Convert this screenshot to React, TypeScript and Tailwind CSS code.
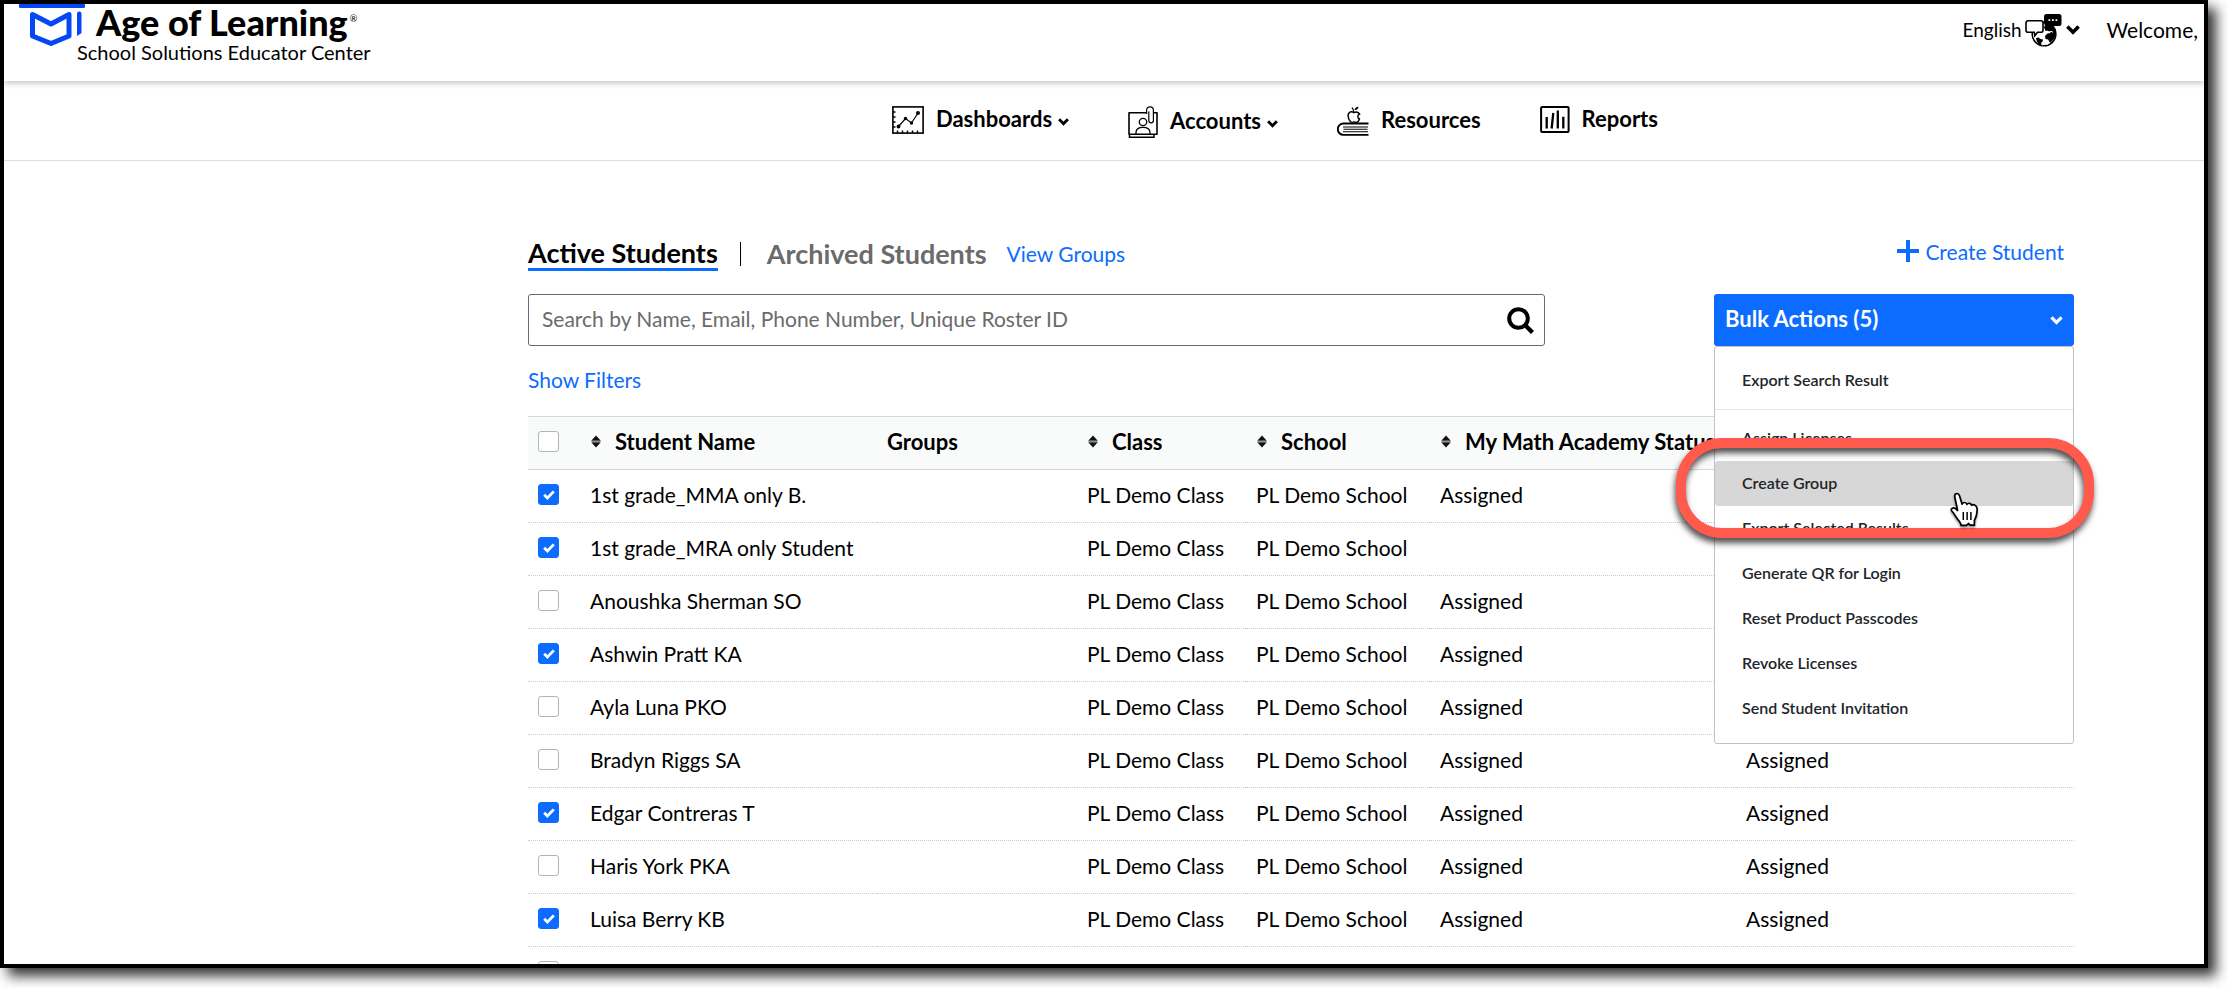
import React from "react";

const students = [
  { name: "1st grade_MMA only B.", math: "Assigned", reading: "", checked: true },
  { name: "1st grade_MRA only Student", math: "", reading: "", checked: true },
  { name: "Anoushka Sherman SO", math: "Assigned", reading: "", checked: false },
  { name: "Ashwin Pratt KA", math: "Assigned", reading: "", checked: true },
  { name: "Ayla Luna PKO", math: "Assigned", reading: "", checked: false },
  { name: "Bradyn Riggs SA", math: "Assigned", reading: "Assigned", checked: false },
  { name: "Edgar Contreras T", math: "Assigned", reading: "Assigned", checked: true },
  { name: "Haris York PKA", math: "Assigned", reading: "Assigned", checked: false },
  { name: "Luisa Berry KB", math: "Assigned", reading: "Assigned", checked: true },
  { name: "", math: "", reading: "", checked: false },
];

const bulkItems = [
  "Assign Licenses",
  "Create Group",
  "Export Selected Results",
  "Generate QR for Login",
  "Reset Product Passcodes",
  "Revoke Licenses",
  "Send Student Invitation",
];

function Chevron({ className }: { className: string }) {
  return (
    <svg viewBox="0 0 14 10" className={className} fill="none" stroke="currentColor" strokeWidth="3.6" aria-hidden="true">
      <path d="M1.4 1.6 7 7.2l5.6-5.6" />
    </svg>
  );
}

function SortIcon() {
  return (
    <svg viewBox="0 0 10 13" className="h-[13px] w-[10px] shrink-0" aria-hidden="true">
      <path d="M5 0.5 9.8 5.8H.2z" fill="#111" />
      <path d="M5 12.5 9.8 7.2H.2z" fill="#111" />
      <path d="M.6 6.5h8.8" stroke="#8a8d8c" strokeWidth="1.4" />
    </svg>
  );
}

function Check({ label, checked }: { label: string; checked: boolean }) {
  return (
    <div className="grid size-[21px] place-items-center">
      <input
        type="checkbox"
        aria-label={label}
        defaultChecked={checked}
        className="peer col-start-1 row-start-1 size-[21px] appearance-none rounded-[3px] border border-[#adb5bd] bg-white checked:border-[#0c6cff] checked:bg-[#0c6cff]"
      />
      <svg
        viewBox="0 0 12 10"
        className="pointer-events-none invisible col-start-1 row-start-1 h-[10px] w-[12px] peer-checked:visible"
        fill="none"
        stroke="#fff"
        strokeWidth="2.8"
        aria-hidden="true"
      >
        <path d="M1.2 4.8 4.4 8 10.8 1.4" />
      </svg>
    </div>
  );
}

function DashboardIcon() {
  return (
    <svg viewBox="0 0 32 28" className="h-7 w-8" fill="none" stroke="#000" aria-hidden="true">
      <rect x="0.9" y="0.9" width="30.2" height="26.2" strokeWidth="1.6" />
      <path d="M6.5 20.5 13.5 12.5 19.5 17 26 7" strokeWidth="1.2" />
      <g fill="#000" stroke="none">
        <circle cx="6.5" cy="20.5" r="1.9" />
        <circle cx="13.5" cy="12.5" r="1.7" />
        <circle cx="19.5" cy="17" r="1.7" />
        <circle cx="26" cy="7" r="2" />
      </g>
      <path d="M1 6h2.5M1 11h2.5M1 16h2.5M1 21h2.5M5.5 27v-2.5M10.5 27v-2.5M15.5 27v-2.5M20.5 27v-2.5M25.5 27v-2.5" strokeWidth="1.4" />
    </svg>
  );
}

function AccountsIcon() {
  return (
    <svg viewBox="0 0 30 32" className="h-8 w-[30px]" fill="none" stroke="#000" aria-hidden="true">
      <path d="M18.5 6.8H1v21.4h28V6.8h-3" strokeWidth="1.6" strokeLinejoin="round" />
      <path d="M1.5 28.5v2.7h24.5v-2.7" strokeWidth="1.5" />
      <circle cx="15" cy="16" r="3.7" strokeWidth="1.3" />
      <path d="M8 28v-1.500c0-3 2.400-5.200 7-5.200s7 2.200 7 5.200V28" strokeWidth="1.3" />
      <path d="M18.600 8V4.200a3.400 3.400 0 0 1 6.800 0v10.300a2.300 2.300 0 0 1-4.600 0V5.500" strokeWidth="1.2" />
    </svg>
  );
}

function ResourcesIcon() {
  return (
    <svg viewBox="0 0 32 30" className="h-[30px] w-8" fill="none" stroke="#000" aria-hidden="true">
      <path d="M31.5 17.5H6.5a5.700 5.700 0 0 0 0 11.400h25" strokeWidth="1.9" />
      <path d="M6 21h25M6.500 23.300h24M6 25.800h25" strokeWidth="1.1" />
      <path d="M16.800 6.600c-3-2-6.300 0-5.600 4 .4 3 2.200 5.800 4 5.800.9 0 1.200-.4 2-.4s1.200.4 2.100.4c1.400 0 2.500-1.600 3.200-3.400-2.300-1-2.200-4 .1-5-1.500-2-3.900-2.200-5.800-1.400z" strokeWidth="1.4" />
      <path d="M16.900 6.300c-.1-2-.9-3.600-2-4.800" strokeWidth="1.2" />
      <path d="M17.500 4c.3-2 1.900-3.300 4-3.200-.1 2.200-1.700 3.500-4 3.200z" fill="#000" stroke="none" />
    </svg>
  );
}

function ReportsIcon() {
  return (
    <svg viewBox="0 0 30 27" className="h-[27px] w-[30px]" fill="none" stroke="#000" aria-hidden="true">
      <rect x="1.1" y="1.1" width="27.5" height="24.8" rx="1" strokeWidth="2" />
      <path d="M6.7 11v11.5M11.6 22.5 13.3 7M17.8 4.5v18M23.3 10.8v11.7" strokeWidth="2.3" />
    </svg>
  );
}

function LanguageIcon() {
  return (
    <svg viewBox="0 0 37 33" className="h-[33px] w-[37px]" aria-hidden="true">
      <circle cx="19" cy="20" r="11.8" fill="#fff" stroke="#000" strokeWidth="1.6" />
      <path d="M11 24l2.500-.5 2 1.500 2.500.5-.5 2-1.500 1.500.5 3c-3-1.200-5-4.200-5.500-8zM20 10h6l5 6 .2 5-2.600 4.500-3.500 3.500-2-3.500-2.600-.5-.5-3 2.500-2.500 3.500-.5-1.500-1.500-4.500-1z" fill="#000" />
      <path d="M22 16.800l2 1.500 2-1 2 1M17 31l4-1.500 2 1" stroke="#fff" strokeWidth="1" fill="none" />
      <path d="M3 6.800h13a2 2 0 0 1 2 2v7.400a2 2 0 0 1-2 2h-3.500l-2.700 3.500-.5-3.500H3a2 2 0 0 1-2-2V8.800a2 2 0 0 1 2-2z" fill="#fff" stroke="#000" strokeWidth="1.6" />
      <path d="M21.500 0H34a2.500 2.500 0 0 1 2.500 2.500v7A2.500 2.500 0 0 1 34 12h-9l-6.500 3 1.500-4a2.500 2.500 0 0 1-1-2V2.500A2.500 2.500 0 0 1 21.500 0z" fill="#000" />
      <path d="M23.500 6.200h1.800M27 6.200h1.800M30.500 6.200h1.800" stroke="#fff" strokeWidth="1.8" />
    </svg>
  );
}

function NavItem({ icon, label, menu }: { icon: React.ReactNode; label: string; menu?: boolean }) {
  return (
    <a href="#" className="flex items-center">
      {icon}
      <span className="mb-[2px] ml-3 text-[22px] leading-6 font-bold">{label}</span>
      {menu && <Chevron className="mt-[3px] ml-[6px] h-2 w-[11px]" />}
    </a>
  );
}

function TopBar() {
  return (
    <header className="relative z-10 flex h-[77px] shrink-0 items-start justify-between bg-white shadow-[0_2px_6px_rgba(0,0,0,0.25)]">
      <a href="#" className="flex pl-[15px]" aria-label="Age of Learning School Solutions Educator Center">
        <svg viewBox="0 0 66 43" className="h-[43px] w-[66px] shrink-0" aria-hidden="true">
          <path d="M0 0h66v2.500a1.500 1.500 0 0 1-1.500 1.500h-63A1.500 1.500 0 0 1 0 2.500z" fill="#0647f5" />
          <path d="M13.500 10.500 32 20 50 10.500V32L32 39.500 13.500 32z" fill="none" stroke="#0647f5" strokeWidth="5" strokeLinejoin="round" />
          <path d="M58 10a2.200 2.200 0 0 1 4.500-.5V29L58 32z" fill="#0647f5" />
        </svg>
        <span className="-ml-2 flex flex-col">
          <span className="ml-[19px] flex text-[36px] leading-9 font-black text-black">
            Age of Learning<span className="ml-[2px] text-[9px] leading-[30px] font-normal">®</span>
          </span>
          <span className="text-[20px] leading-6">School Solutions Educator Center</span>
        </span>
      </a>
      <div className="flex h-[52px] items-center pr-[6px]">
        <button type="button" className="flex items-center text-[19px]" aria-label="English, change language">
          English
          <span className="ml-[3px]"><LanguageIcon /></span>
          <Chevron className="ml-[4px] h-[10px] w-[14px]" />
        </button>
        <span className="ml-[27px] text-[21px]">Welcome,</span>
      </div>
    </header>
  );
}

function BulkActions() {
  return (
    <div className="relative z-10 w-[360px]">
      <button
        type="button"
        aria-expanded="true"
        className="flex h-[52px] w-full items-center justify-between rounded-[3px] bg-[#0c6cff] pr-[11px] pb-[3px] pl-[11px] text-[22px] font-bold text-white"
      >
        Bulk Actions (5)
        <Chevron className="mt-1 h-[9px] w-[13px]" />
      </button>
      <div className="absolute top-full left-0 w-full rounded-[3px] border border-[#bfc1c3] bg-white pt-[11px] pb-3 text-[16px] font-semibold text-[#212529]">
        <button type="button" className="flex h-[45px] w-full items-center px-[27px] pb-[2px]">Export Search Result</button>
        <hr className="my-[6px] border-[#e4e6e8]" />
        {bulkItems.map((item) => (
          <button
            key={item}
            type="button"
            className={
              item === "Create Group"
                ? "flex h-[45px] w-full items-center rounded-[3px] bg-[#d7d7d7] px-[27px] pb-[2px]"
                : "flex h-[45px] w-full items-center px-[27px] pb-[2px]"
            }
          >
            {item}
          </button>
        ))}
      </div>
      <div className="pointer-events-none absolute top-[144px] -left-[38px] h-[100px] w-[418px] rounded-[46px] border-[10px] border-[#ff5a4c] drop-shadow-[-1px_5px_3px_rgba(0,0,0,0.7)]" />
      <svg
        viewBox="0 0 30 35"
        className="pointer-events-none absolute top-[198px] left-[235px] h-[35px] w-[30px] drop-shadow-[0_2px_1px_rgba(0,0,0,0.4)]"
        aria-hidden="true"
      >
        <path
          d="M8.600 18.500 5.800 5C5 1.200 9.400.1 10.500 3.800l2.600 8.400c.9-2.400 4.200-2.200 4.900.2 1.100-1.800 4-1.400 4.700.9 1.900-1.400 5 0 5.300 2.900.5 4.300-.4 8.200-2.600 12.400v4.600h-4.200l-1.600-1.700-2.200 1.900h-5.300c0-2.300-1.500-3.700-3.100-5.700-2.100-2.600-3.300-5.300-6-8.400-1.900-2.400 1-4.500 3.200-2.900z"
          fill="#fff"
          stroke="#000"
          strokeWidth="1.7"
          strokeLinejoin="round"
        />
        <path d="M14.300 20v8M18.100 20v8M21.900 20v8" stroke="#000" strokeWidth="1.5" />
      </svg>
    </div>
  );
}

function HeadCell({ label, sortable }: { label: string; sortable?: boolean }) {
  return (
    <th scope="col" className="p-0 pb-[3px] pl-[10px] text-left align-middle text-[22px] font-bold whitespace-nowrap">
      {sortable ? (
        <button type="button" className="flex items-center gap-[14px] pl-px font-bold whitespace-nowrap">
          <SortIcon />
          {label}
        </button>
      ) : (
        label
      )}
    </th>
  );
}

function Cell({ children }: { children?: React.ReactNode }) {
  return <td className="p-0 pb-[3px] pl-[10px] align-middle whitespace-nowrap">{children}</td>;
}

export default function App() {
  return (
    <div className="h-screen overflow-hidden bg-white pr-5 pb-5 font-['Lato',sans-serif] text-black">
      <div className="h-full border-4 border-black shadow-[8px_8px_12px_rgba(0,0,0,0.8)]">
        <div className="flex h-full flex-col overflow-hidden bg-white">
          <TopBar />
          <nav className="flex h-20 shrink-0 items-start gap-[59px] border-b border-[#dcdede] pt-[25px] pl-[888px]">
            <NavItem icon={<DashboardIcon />} label="Dashboards" menu />
            <NavItem icon={<AccountsIcon />} label="Accounts" menu />
            <NavItem icon={<ResourcesIcon />} label="Resources" />
            <NavItem icon={<ReportsIcon />} label="Reports" />
          </nav>

          <main className="min-h-0 flex-1 overflow-hidden pt-[76px] pr-[130px] pl-[524px] text-[21px]">
            <div className="flex h-[57px] items-start justify-between">
              <div className="flex items-center">
                <h1 className="border-b-[3px] border-[#0c6cff] text-[27px] leading-[31px] font-bold">
                  <a href="#">Active Students</a>
                </h1>
                <span className="ml-[22px] h-6 w-px bg-black" />
                <a href="#" className="ml-[26px] pb-[2px] text-[27px] leading-[31px] font-bold text-[#6b6b6b]">Archived Students</a>
                <a href="#" className="ml-5 leading-[30px] text-[#0c6cff]">View Groups</a>
              </div>
              <a href="#" className="flex items-center gap-[6px] pr-[10px] leading-[30px] text-[#0c6cff]">
                <svg viewBox="0 0 22 22" className="mb-[2px] size-[22px]" stroke="currentColor" strokeWidth="4" aria-hidden="true">
                  <path d="M11 0v22M0 11h22" />
                </svg>
                Create Student
              </a>
            </div>

            <div className="flex items-start justify-between">
              <label className="flex h-[52px] w-[1017px] items-center rounded-[3px] border border-[#6b6b6b] pr-[10px] pl-[13px]">
                <input
                  type="search"
                  aria-label="Search students"
                  placeholder="Search by Name, Email, Phone Number, Unique Roster ID"
                  className="flex-1 bg-transparent pb-[3px] outline-none placeholder:text-[#6b6b6b]"
                />
                <svg viewBox="0 0 27 27" className="size-[27px]" fill="none" stroke="#000" aria-hidden="true">
                  <circle cx="11.5" cy="11.5" r="9.3" strokeWidth="4" />
                  <path d="M18 18l7.500 7.500" strokeWidth="4.4" />
                </svg>
              </label>
              <BulkActions />
            </div>

            <a href="#" className="mt-[19px] block w-fit leading-[30px] text-[#0c6cff]">Show Filters</a>

            <table className="mt-[21px] w-full table-fixed border-collapse">
              <colgroup>
                <col className="w-[52px]" />
                <col className="w-[297px]" />
                <col className="w-[200px]" />
                <col className="w-[169px]" />
                <col className="w-[184px]" />
                <col className="w-[306px]" />
                <col />
              </colgroup>
              <thead>
                <tr className="h-[53px] border-y border-[#d5d8d7] bg-[#f9fbfa]">
                  <th className="p-0 pb-[3px] pl-[10px] align-middle"><Check label="Select all students" checked={false} /></th>
                  <HeadCell label="Student Name" sortable />
                  <HeadCell label="Groups" />
                  <HeadCell label="Class" sortable />
                  <HeadCell label="School" sortable />
                  <HeadCell label="My Math Academy Status" sortable />
                  <th className="p-0" aria-label="Reading status" />
                </tr>
              </thead>
              <tbody>
                {students.map((s, i) => (
                  <tr key={i} className="h-[53px] border-b border-dotted border-[#c9cccb]">
                    <Cell><Check label={"Select " + s.name} checked={s.checked} /></Cell>
                    <Cell>{s.name}</Cell>
                    <Cell />
                    <Cell>{s.name && "PL Demo Class"}</Cell>
                    <Cell>{s.name && "PL Demo School"}</Cell>
                    <Cell>{s.math}</Cell>
                    <Cell>{s.reading}</Cell>
                  </tr>
                ))}
              </tbody>
            </table>
          </main>
        </div>
      </div>
    </div>
  );
}
